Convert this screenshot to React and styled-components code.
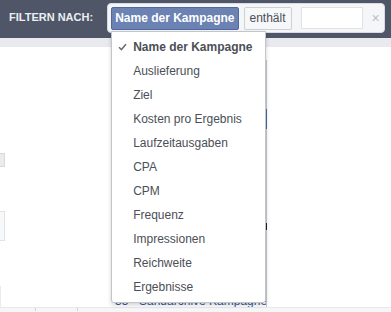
import React from "react";
import styled, { createGlobalStyle } from "styled-components";

const Global = createGlobalStyle`
  html, body { margin: 0; padding: 0; background: #fff; }
  body { width: 391px; height: 312px; overflow: hidden; font-family: "Liberation Sans", Arial, sans-serif; }
  * { box-sizing: border-box; }
`;

const Page = styled.div`
  width: 391px;
  height: 312px;
  display: flex;
  flex-direction: column;
  background: #fff;
`;

const Header = styled.div`
  height: 38px;
  background: #4e5668;
  display: flex;
  align-items: flex-start;
  padding-left: 9px;
`;

const Label = styled.span`
  margin-top: 11px;
  font-size: 11px;
  font-weight: bold;
  color: #eceef2;
  line-height: 13px;
`;

const FilterBox = styled.div`
  position: relative;
  margin-top: 3px;
  margin-left: 14px;
  width: 278px;
  height: 30px;
  background: #f5f6f7;
  border: 1px solid #d8dbe0;
  border-radius: 4px;
  display: flex;
  align-items: center;
  padding: 0 3px;
`;

const Chip = styled.div`
  height: 23px;
  display: flex;
  align-items: center;
  padding: 0 ${(p) => (p.$primary ? 3 : 5)}px;
  font-size: 12px;
  font-weight: ${(p) => (p.$primary ? "bold" : "normal")};
  color: ${(p) => (p.$primary ? "#fff" : "#4b4f56")};
  background: ${(p) => (p.$primary ? "#6b82b3" : "#f6f7f9")};
  border: 1px solid ${(p) => (p.$primary ? "#4e69a2" : "#cdd0d5")};
  border-radius: 2px;
  margin-right: ${(p) => p.$gap}px;
  white-space: nowrap;
`;

const Input = styled.div`
  width: 62px;
  height: 22px;
  background: #fff;
  border: 1px solid #dfe1e5;
  margin-right: 9px;
`;

const Close = styled.span`
  font-size: 14px;
  color: #bcc0c7;
  line-height: 14px;
`;

const Menu = styled.div`
  position: absolute;
  left: 3px;
  top: 27px;
  width: 155px;
  background: #fff;
  border: 1px solid #c2c5cb;
  border-radius: 0 0 3px 3px;
  box-shadow: 0 2px 4px rgba(0, 0, 0, 0.18);
  padding: 3px 0;
  z-index: 10;
`;

const Item = styled.div`
  height: 24px;
  display: flex;
  align-items: center;
  padding-left: 6px;
  font-size: 12px;
  color: #4b4f56;
  font-weight: ${(p) => (p.$active ? "bold" : "normal")};
  white-space: nowrap;
`;

const CheckSlot = styled.span`
  width: 15px;
  display: flex;
  align-items: center;
`;

const Strip = styled.div`
  height: 9px;
  background: #e9eaed;
`;

const Content = styled.div`
  flex: 1;
  display: flex;
`;

const LeftPane = styled.div`
  width: 266px;
  display: flex;
  flex-direction: column;
`;

const Stub = styled.div`
  width: 5px;
  height: ${(p) => p.$h}px;
  margin-top: ${(p) => p.$mt}px;
  background: ${(p) => p.$bg};
  border: 1px solid ${(p) => p.$bd};
  border-left: none;
`;

const BottomRow = styled.div`
  margin-top: 45px;
  height: 21px;
  display: flex;
  align-items: flex-end;
`;

const LinkText = styled.span`
  margin-left: 114px;
  font-size: 12px;
  color: #365899;
  line-height: 13px;
  margin-bottom: -1px;
  white-space: nowrap;
`;

const Divider = styled.div`
  width: 1px;
  margin-top: 13px;
  display: flex;
  flex-direction: column;
`;

const Seg = styled.div`
  height: ${(p) => p.$h}px;
  background: ${(p) => p.$c};
`;

const Footer = styled.div`
  height: 5px;
  background: #f5f6f7;
  border-top: 1px solid #e6e8eb;
  display: flex;
`;

const Tick = styled.div`
  width: 1px;
  height: 3px;
  background: #d0d3d8;
  margin-left: ${(p) => p.$ml}px;
`;

const items = [
  "Name der Kampagne",
  "Auslieferung",
  "Ziel",
  "Kosten pro Ergebnis",
  "Laufzeitausgaben",
  "CPA",
  "CPM",
  "Frequenz",
  "Impressionen",
  "Reichweite",
  "Ergebnisse",
];

const Check = () => (
  <svg width="9" height="8" viewBox="0 0 9 8">
    <polyline points="1,4.2 3.4,6.6 8,1.2" fill="none" stroke="#6a6e75" strokeWidth="1.5" />
  </svg>
);

export default function App() {
  return (
    <Page>
      <Global />
      <Header>
        <Label>FILTERN NACH:</Label>
        <FilterBox>
          <Chip $primary $gap={5}>Name der Kampagne</Chip>
          <Chip $gap={9}>enthält</Chip>
          <Input />
          <Close>×</Close>
          <Menu>
            {items.map((t, i) => (
              <Item key={t} $active={i === 0}>
                <CheckSlot>{i === 0 && <Check />}</CheckSlot>
                {t}
              </Item>
            ))}
          </Menu>
        </FilterBox>
      </Header>
      <Strip />
      <Content>
        <LeftPane>
          <Stub $mt={106} $h={14} $bg="#e9ebee" $bd="#d6d9dd" />
          <Stub $mt={44} $h={30} $bg="#f7f8f9" $bd="#e1e3e6" />
          <BottomRow>
            <Stub $mt={0} $h={21} $bg="#f6f7f9" $bd="#e9ebee" />
            <LinkText>35 · Sandarchive Kampagne</LinkText>
          </BottomRow>
        </LeftPane>
        <Divider>
          <Seg $h={49} $c="#c6c9ce" />
          <Seg $h={20} $c="#4c66a4" />
          <Seg $h={94} $c="#c6c9ce" />
          <Seg $h={7} $c="#1d2129" />
          <Seg $h={77} $c="#c6c9ce" />
        </Divider>
      </Content>
      <Footer>
        <Tick $ml={35} />
        <Tick $ml={41} />
      </Footer>
    </Page>
  );
}
